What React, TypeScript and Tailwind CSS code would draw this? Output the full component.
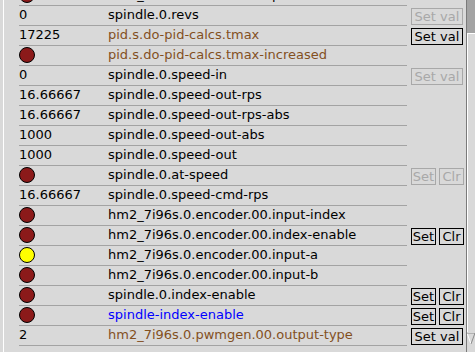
type Led = 'red' | 'yellow';
type Btn = 'setval' | 'setclr';

interface Row {
  val?: string;
  led?: Led;
  name: string;
  tone?: 'plain' | 'param' | 'signal';
  btn?: Btn;
  on?: boolean;
}

const rows: Row[] = [
  { led: 'red', name: 'hm2_7i96s.0.encoder.00.phase-error' },
  { val: '0', name: 'spindle.0.revs', btn: 'setval' },
  { val: '17225', name: 'pid.s.do-pid-calcs.tmax', tone: 'param', btn: 'setval', on: true },
  { led: 'red', name: 'pid.s.do-pid-calcs.tmax-increased', tone: 'param' },
  { val: '0', name: 'spindle.0.speed-in', btn: 'setval' },
  { val: '16.66667', name: 'spindle.0.speed-out-rps' },
  { val: '16.66667', name: 'spindle.0.speed-out-rps-abs' },
  { val: '1000', name: 'spindle.0.speed-out-abs' },
  { val: '1000', name: 'spindle.0.speed-out' },
  { led: 'red', name: 'spindle.0.at-speed', btn: 'setclr' },
  { val: '16.66667', name: 'spindle.0.speed-cmd-rps' },
  { led: 'red', name: 'hm2_7i96s.0.encoder.00.input-index' },
  { led: 'red', name: 'hm2_7i96s.0.encoder.00.index-enable', btn: 'setclr', on: true },
  { led: 'yellow', name: 'hm2_7i96s.0.encoder.00.input-a' },
  { led: 'red', name: 'hm2_7i96s.0.encoder.00.input-b' },
  { led: 'red', name: 'spindle.0.index-enable', btn: 'setclr', on: true },
  { led: 'red', name: 'spindle-index-enable', tone: 'signal', btn: 'setclr', on: true },
  { val: '2', name: 'hm2_7i96s.0.pwmgen.00.output-type', tone: 'param', btn: 'setval', on: true },
];

const toneClass = {
  plain: 'text-black',
  param: 'text-[#83501e]',
  signal: 'text-[#0000ff]',
};

function Button({ label, on, wide }: { label: string; on?: boolean; wide?: string }) {
  return (
    <div
      className={`${wide} h-[17px] border text-center leading-[15px] ${
        on ? 'border-black text-black' : 'border-[#a8a8a8] text-[#a8a8a8]'
      }`}
    >
      {label}
    </div>
  );
}

function WatchRow({ row }: { row: Row }) {
  return (
    <div className="flex h-[20px]">
      <div className="ml-[15px] flex w-[388px] items-center border-b border-[#a3a3a3] pb-px leading-[18px]">
        <div className="flex w-[89px] items-center">
          {row.led ? (
            <div
              className={`h-[16px] w-[16px] rounded-full border border-black ${
                row.led === 'red' ? 'bg-[#8b1a1a]' : 'bg-[#ffff00]'
              }`}
            />
          ) : (
            <span>{row.val}</span>
          )}
        </div>
        <span className={`whitespace-nowrap ${toneClass[row.tone ?? 'plain']}`}>{row.name}</span>
      </div>
      <div className="ml-[4px] flex items-center gap-[3px]">
        {row.btn === 'setval' && <Button label="Set val" on={row.on} wide="w-[52px]" />}
        {row.btn === 'setclr' && (
          <>
            <Button label="Set" on={row.on} wide="w-[25px]" />
            <Button label="Clr" on={row.on} wide="w-[25px]" />
          </>
        )}
      </div>
    </div>
  );
}

function Scrollbar() {
  return (
    <div className="flex w-[9px] flex-col border-l border-[#7a7a7a]">
      <div className="h-[33px] bg-[#a3a3a3]" />
      <div className="flex-1 border-l border-t border-white bg-[#d9d9d9]" />
      <div className="h-[20px] pt-[1px]">
        <svg width="8" height="12" viewBox="0 0 8 12">
          <polygon points="0,0 8,0 4,11" fill="#d9d9d9" />
          <polyline points="0,0 4,11" stroke="#ffffff" fill="none" />
          <polyline points="0,0 8,0 4,11" stroke="#8a8a8a" fill="none" />
        </svg>
      </div>
    </div>
  );
}

export default function App() {
  return (
    <div className="flex h-[352px] w-[475px] overflow-hidden bg-[#d9d9d9] font-['DejaVu_Sans',sans-serif] text-[13px] text-black">
      <div className="ml-[3px] flex-1 overflow-hidden border-l border-white">
        <div className="-mt-[14px]">
          {rows.map((row, i) => (
            <WatchRow key={i} row={row} />
          ))}
        </div>
      </div>
      <div className="ml-[2px] flex">
        <Scrollbar />
      </div>
    </div>
  );
}
